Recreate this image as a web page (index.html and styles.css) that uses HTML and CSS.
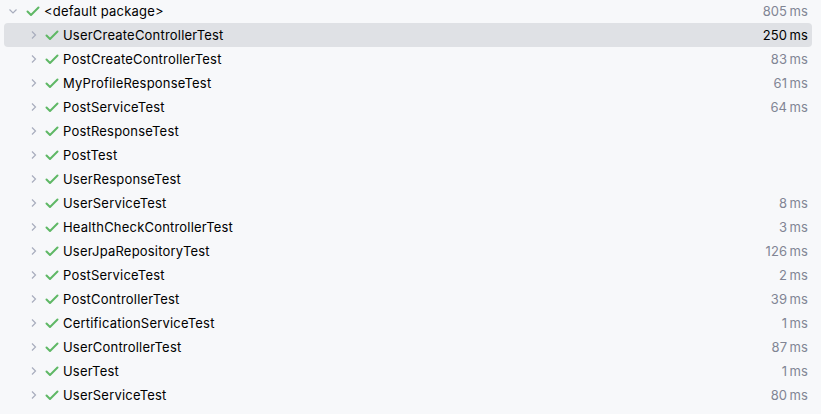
FILE: index.html
```html
<!DOCTYPE html>
<html>
<head>
<meta charset="utf-8">
<link rel="stylesheet" href="styles.css">
</head>
<body>
<div class="tree">
  <div class="row root">
    <span class="chev"><svg width="16" height="16" viewBox="0 0 16 16"><path d="M4.5 6.5 L8 10 L11.5 6.5" fill="none" stroke="#a8adbd" stroke-width="1.2"/></svg></span>
    <span class="ok"><svg width="16" height="16" viewBox="0 0 16 16"><path d="M2.5 8.5 L6 12 L13.5 4.5" fill="none" stroke="#5fb865" stroke-width="2" stroke-linecap="round" stroke-linejoin="round"/></svg></span>
    <span class="name">&lt;default package&gt;</span>
    <span class="time">805&#8201;ms</span>
  </div>
  <div class="row child sel"><span class="chev"><svg width="16" height="16" viewBox="0 0 16 16"><path d="M6 4.5 L9.5 8 L6 11.5" fill="none" stroke="#a8adbd" stroke-width="1.2"/></svg></span><span class="ok"><svg width="16" height="16" viewBox="0 0 16 16"><path d="M2.5 8.5 L6 12 L13.5 4.5" fill="none" stroke="#5fb865" stroke-width="2" stroke-linecap="round" stroke-linejoin="round"/></svg></span><span class="name">UserCreateControllerTest</span><span class="time">250&#8201;ms</span></div>
  <div class="row child"><span class="chev"><svg width="16" height="16" viewBox="0 0 16 16"><path d="M6 4.5 L9.5 8 L6 11.5" fill="none" stroke="#a8adbd" stroke-width="1.2"/></svg></span><span class="ok"><svg width="16" height="16" viewBox="0 0 16 16"><path d="M2.5 8.5 L6 12 L13.5 4.5" fill="none" stroke="#5fb865" stroke-width="2" stroke-linecap="round" stroke-linejoin="round"/></svg></span><span class="name">PostCreateControllerTest</span><span class="time">83&#8201;ms</span></div>
  <div class="row child"><span class="chev"><svg width="16" height="16" viewBox="0 0 16 16"><path d="M6 4.5 L9.5 8 L6 11.5" fill="none" stroke="#a8adbd" stroke-width="1.2"/></svg></span><span class="ok"><svg width="16" height="16" viewBox="0 0 16 16"><path d="M2.5 8.5 L6 12 L13.5 4.5" fill="none" stroke="#5fb865" stroke-width="2" stroke-linecap="round" stroke-linejoin="round"/></svg></span><span class="name">MyProfileResponseTest</span><span class="time">61&#8201;ms</span></div>
  <div class="row child"><span class="chev"><svg width="16" height="16" viewBox="0 0 16 16"><path d="M6 4.5 L9.5 8 L6 11.5" fill="none" stroke="#a8adbd" stroke-width="1.2"/></svg></span><span class="ok"><svg width="16" height="16" viewBox="0 0 16 16"><path d="M2.5 8.5 L6 12 L13.5 4.5" fill="none" stroke="#5fb865" stroke-width="2" stroke-linecap="round" stroke-linejoin="round"/></svg></span><span class="name">PostServiceTest</span><span class="time">64&#8201;ms</span></div>
  <div class="row child"><span class="chev"><svg width="16" height="16" viewBox="0 0 16 16"><path d="M6 4.5 L9.5 8 L6 11.5" fill="none" stroke="#a8adbd" stroke-width="1.2"/></svg></span><span class="ok"><svg width="16" height="16" viewBox="0 0 16 16"><path d="M2.5 8.5 L6 12 L13.5 4.5" fill="none" stroke="#5fb865" stroke-width="2" stroke-linecap="round" stroke-linejoin="round"/></svg></span><span class="name">PostResponseTest</span><span class="time"></span></div>
  <div class="row child"><span class="chev"><svg width="16" height="16" viewBox="0 0 16 16"><path d="M6 4.5 L9.5 8 L6 11.5" fill="none" stroke="#a8adbd" stroke-width="1.2"/></svg></span><span class="ok"><svg width="16" height="16" viewBox="0 0 16 16"><path d="M2.5 8.5 L6 12 L13.5 4.5" fill="none" stroke="#5fb865" stroke-width="2" stroke-linecap="round" stroke-linejoin="round"/></svg></span><span class="name">PostTest</span><span class="time"></span></div>
  <div class="row child"><span class="chev"><svg width="16" height="16" viewBox="0 0 16 16"><path d="M6 4.5 L9.5 8 L6 11.5" fill="none" stroke="#a8adbd" stroke-width="1.2"/></svg></span><span class="ok"><svg width="16" height="16" viewBox="0 0 16 16"><path d="M2.5 8.5 L6 12 L13.5 4.5" fill="none" stroke="#5fb865" stroke-width="2" stroke-linecap="round" stroke-linejoin="round"/></svg></span><span class="name">UserResponseTest</span><span class="time"></span></div>
  <div class="row child"><span class="chev"><svg width="16" height="16" viewBox="0 0 16 16"><path d="M6 4.5 L9.5 8 L6 11.5" fill="none" stroke="#a8adbd" stroke-width="1.2"/></svg></span><span class="ok"><svg width="16" height="16" viewBox="0 0 16 16"><path d="M2.5 8.5 L6 12 L13.5 4.5" fill="none" stroke="#5fb865" stroke-width="2" stroke-linecap="round" stroke-linejoin="round"/></svg></span><span class="name">UserServiceTest</span><span class="time">8&#8201;ms</span></div>
  <div class="row child"><span class="chev"><svg width="16" height="16" viewBox="0 0 16 16"><path d="M6 4.5 L9.5 8 L6 11.5" fill="none" stroke="#a8adbd" stroke-width="1.2"/></svg></span><span class="ok"><svg width="16" height="16" viewBox="0 0 16 16"><path d="M2.5 8.5 L6 12 L13.5 4.5" fill="none" stroke="#5fb865" stroke-width="2" stroke-linecap="round" stroke-linejoin="round"/></svg></span><span class="name">HealthCheckControllerTest</span><span class="time">3&#8201;ms</span></div>
  <div class="row child"><span class="chev"><svg width="16" height="16" viewBox="0 0 16 16"><path d="M6 4.5 L9.5 8 L6 11.5" fill="none" stroke="#a8adbd" stroke-width="1.2"/></svg></span><span class="ok"><svg width="16" height="16" viewBox="0 0 16 16"><path d="M2.5 8.5 L6 12 L13.5 4.5" fill="none" stroke="#5fb865" stroke-width="2" stroke-linecap="round" stroke-linejoin="round"/></svg></span><span class="name">UserJpaRepositoryTest</span><span class="time">126&#8201;ms</span></div>
  <div class="row child"><span class="chev"><svg width="16" height="16" viewBox="0 0 16 16"><path d="M6 4.5 L9.5 8 L6 11.5" fill="none" stroke="#a8adbd" stroke-width="1.2"/></svg></span><span class="ok"><svg width="16" height="16" viewBox="0 0 16 16"><path d="M2.5 8.5 L6 12 L13.5 4.5" fill="none" stroke="#5fb865" stroke-width="2" stroke-linecap="round" stroke-linejoin="round"/></svg></span><span class="name">PostServiceTest</span><span class="time">2&#8201;ms</span></div>
  <div class="row child"><span class="chev"><svg width="16" height="16" viewBox="0 0 16 16"><path d="M6 4.5 L9.5 8 L6 11.5" fill="none" stroke="#a8adbd" stroke-width="1.2"/></svg></span><span class="ok"><svg width="16" height="16" viewBox="0 0 16 16"><path d="M2.5 8.5 L6 12 L13.5 4.5" fill="none" stroke="#5fb865" stroke-width="2" stroke-linecap="round" stroke-linejoin="round"/></svg></span><span class="name">PostControllerTest</span><span class="time">39&#8201;ms</span></div>
  <div class="row child"><span class="chev"><svg width="16" height="16" viewBox="0 0 16 16"><path d="M6 4.5 L9.5 8 L6 11.5" fill="none" stroke="#a8adbd" stroke-width="1.2"/></svg></span><span class="ok"><svg width="16" height="16" viewBox="0 0 16 16"><path d="M2.5 8.5 L6 12 L13.5 4.5" fill="none" stroke="#5fb865" stroke-width="2" stroke-linecap="round" stroke-linejoin="round"/></svg></span><span class="name">CertificationServiceTest</span><span class="time">1&#8201;ms</span></div>
  <div class="row child"><span class="chev"><svg width="16" height="16" viewBox="0 0 16 16"><path d="M6 4.5 L9.5 8 L6 11.5" fill="none" stroke="#a8adbd" stroke-width="1.2"/></svg></span><span class="ok"><svg width="16" height="16" viewBox="0 0 16 16"><path d="M2.5 8.5 L6 12 L13.5 4.5" fill="none" stroke="#5fb865" stroke-width="2" stroke-linecap="round" stroke-linejoin="round"/></svg></span><span class="name">UserControllerTest</span><span class="time">87&#8201;ms</span></div>
  <div class="row child"><span class="chev"><svg width="16" height="16" viewBox="0 0 16 16"><path d="M6 4.5 L9.5 8 L6 11.5" fill="none" stroke="#a8adbd" stroke-width="1.2"/></svg></span><span class="ok"><svg width="16" height="16" viewBox="0 0 16 16"><path d="M2.5 8.5 L6 12 L13.5 4.5" fill="none" stroke="#5fb865" stroke-width="2" stroke-linecap="round" stroke-linejoin="round"/></svg></span><span class="name">UserTest</span><span class="time">1&#8201;ms</span></div>
  <div class="row child"><span class="chev"><svg width="16" height="16" viewBox="0 0 16 16"><path d="M6 4.5 L9.5 8 L6 11.5" fill="none" stroke="#a8adbd" stroke-width="1.2"/></svg></span><span class="ok"><svg width="16" height="16" viewBox="0 0 16 16"><path d="M2.5 8.5 L6 12 L13.5 4.5" fill="none" stroke="#5fb865" stroke-width="2" stroke-linecap="round" stroke-linejoin="round"/></svg></span><span class="name">UserServiceTest</span><span class="time">80&#8201;ms</span></div>
</div>
</body>
</html>
```

FILE: styles.css
```css
html, body {
  margin: 0;
  padding: 0;
  background: #f7f8fa;
}
body {
  font-family: Inter, "Noto Sans", sans-serif;
  font-size: 13px;
  color: #000000;
  overflow: hidden;
}
.tree {
  display: flex;
  flex-direction: column;
  margin-top: -1px;
  padding: 0 9px 0 4px;
}
.row {
  display: flex;
  align-items: center;
  height: 24px;
  border-radius: 4px;
}
.row.sel {
  background: #dfe1e5;
}
.chev, .ok {
  display: flex;
  width: 16px;
  height: 16px;
  flex: none;
}
.root .chev {
  margin-left: 1px;
}
.root .ok {
  margin-left: 4px;
}
.child .chev {
  margin-left: 22px;
}
.child .ok {
  margin-left: 2px;
}
.name {
  margin-left: 3px;
  flex: 1;
  white-space: nowrap;
  letter-spacing: 0.2px;
}
.time {
  color: #818594;
  padding-right: 4px;
  white-space: nowrap;
  letter-spacing: 0.1px;
}
.sel .time {
  color: #000000;
}
```
